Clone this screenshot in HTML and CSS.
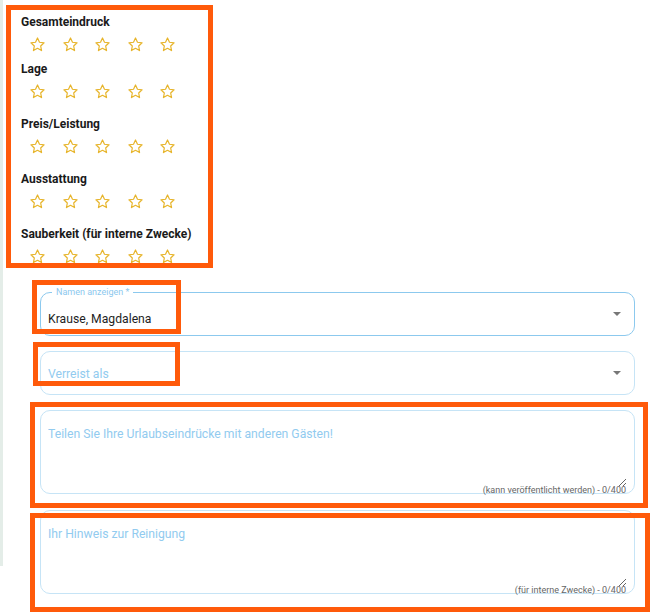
FILE: index.html
```html
<!DOCTYPE html>
<html lang="de">
<head>
    <meta charset="UTF-8">
    <meta name="viewport" content="width=device-width, initial-scale=1.0">
    <title>Bewertung</title>
    <link rel="stylesheet" href="styles.css">
</head>
<body>
    <div class="page">
        <div class="rail"></div>

        <main class="content">
            <section class="ratings">
                <div class="rating-group rating-group--tight">
                    <div class="rating-label">Gesamteindruck</div>
                    <div class="stars" data-count="5"></div>
                </div>
                <div class="rating-group">
                    <div class="rating-label">Lage</div>
                    <div class="stars" data-count="5"></div>
                </div>
                <div class="rating-group">
                    <div class="rating-label">Preis/Leistung</div>
                    <div class="stars" data-count="5"></div>
                </div>
                <div class="rating-group">
                    <div class="rating-label">Ausstattung</div>
                    <div class="stars" data-count="5"></div>
                </div>
                <div class="rating-group">
                    <div class="rating-label">Sauberkeit (für interne Zwecke)</div>
                    <div class="stars" data-count="5"></div>
                </div>
            </section>

            <form class="review-form">
                <div class="field field--select field--filled">
                    <span class="field-label">Namen anzeigen *</span>
                    <span class="field-value">Krause, Magdalena</span>
                    <span class="select-arrow"></span>
                </div>

                <div class="field field--select">
                    <span class="field-placeholder">Verreist als</span>
                    <span class="select-arrow"></span>
                </div>

                <div class="field field--area">
                    <textarea class="area-input" placeholder="Teilen Sie Ihre Urlaubseindrücke mit anderen Gästen!"></textarea>
                    <span class="counter">(kann veröffentlicht werden) - 0/400</span>
                </div>

                <div class="field field--area">
                    <textarea class="area-input" placeholder="Ihr Hinweis zur Reinigung"></textarea>
                    <span class="counter">(für interne Zwecke) - 0/400</span>
                </div>
            </form>
        </main>

        <!-- annotation frames -->
        <div class="mark mark-ratings"></div>
        <div class="mark mark-name"></div>
        <div class="mark mark-travel"></div>
        <div class="mark mark-review"></div>
        <div class="mark mark-cleaning"></div>
    </div>

    <script>
        const starSvg = '<svg class="star" viewBox="0 0 24 24"><path d="M12 2.8l2.8 6 6.5.8-4.8 4.5 1.2 6.5L12 17.4l-5.7 3.2 1.2-6.5-4.8-4.5 6.5-.8z"/></svg>';

        document.querySelectorAll('.stars').forEach(row => {
            const count = parseInt(row.dataset.count, 10);
            row.innerHTML = starSvg.repeat(count);
        });
    </script>
</body>
</html>
```

FILE: styles.css
```css
body {
    font-family: Roboto, 'Noto Sans', 'Liberation Sans', sans-serif;
    background-color: #FFFFFF;
    margin: 0;
    color: #1F1F1F;
}

.page {
    position: relative;
    display: flex;
    width: 670px;
    height: 614px;
    overflow: hidden;
}

.rail {
    flex: 0 0 3px;
    height: 566px;
    background-color: #E4EDE8;
}

.content {
    flex: 1;
    padding-top: 14px;
}

/* ratings */

.ratings {
    padding-left: 18px;
}

.rating-group {
    margin-bottom: 16px;
}

.rating-group--tight {
    margin-bottom: 8px;
}

.rating-label {
    font-size: 12px;
    font-weight: 700;
    line-height: 16px;
    color: #1A1A1A;
}

.stars {
    display: flex;
    gap: 15.5px;
    margin-top: 6px;
    padding-left: 8px;
}

.star {
    width: 17px;
    height: 17px;
    fill: none;
    stroke: #E7B52C;
    stroke-width: 1.7;
    stroke-linejoin: round;
}

/* form */

.review-form {
    display: flex;
    flex-direction: column;
    width: 595px;
    margin-left: 37px;
    margin-top: 27px;
}

.field {
    position: relative;
    box-sizing: border-box;
    border: 1px solid #C6E4F6;
    border-radius: 10px;
    background-color: white;
}

.field--select {
    display: flex;
    align-items: center;
    height: 44px;
    padding: 0 12px 0 7px;
    margin-bottom: 15px;
    font-size: 12.2px;
}

.field--filled {
    border-color: #8CC9EE;
}

.field-label {
    position: absolute;
    top: -6px;
    left: 11px;
    padding: 0 4px;
    background-color: white;
    font-size: 9px;
    line-height: 11px;
    color: #8CC8EE;
}

.field-value {
    flex: 1;
    padding-top: 10px;
    color: #1F1F1F;
}

.field-placeholder {
    flex: 1;
    padding-top: 2px;
    color: #92CBEF;
}

.select-arrow {
    width: 0;
    height: 0;
    border-left: 4px solid transparent;
    border-right: 4px solid transparent;
    border-top: 4px solid #777777;
    margin-right: 1px;
}

.field--area {
    height: 84px;
    padding: 15px 7px 6px 7px;
    margin-bottom: 16px;
}

.area-input {
    display: block;
    box-sizing: border-box;
    width: 100%;
    height: 100%;
    margin: 0;
    padding: 0;
    border: none;
    outline: none;
    resize: vertical;
    font-family: Roboto, 'Noto Sans', sans-serif;
    font-size: 12.2px;
    line-height: 16px;
    color: #1F1F1F;
    background: transparent;
}

.area-input::placeholder {
    color: #92CBEF;
}

.counter {
    position: absolute;
    right: 8px;
    bottom: -3px;
    font-size: 9px;
    line-height: 11px;
    color: #666666;
}

/* orange annotation frames lying over the form */

.mark {
    position: absolute;
    box-sizing: border-box;
    border: 5px solid #FF5A0A;
    pointer-events: none;
}

.mark-ratings {
    left: 6px;
    top: 5px;
    width: 207px;
    height: 263px;
}

.mark-name {
    left: 32px;
    top: 280px;
    width: 149px;
    height: 54px;
}

.mark-travel {
    left: 33px;
    top: 342px;
    width: 147px;
    height: 44px;
}

.mark-review {
    left: 30px;
    top: 402px;
    width: 618px;
    height: 106px;
}

.mark-cleaning {
    left: 30px;
    top: 513px;
    width: 620px;
    height: 99px;
}
```
